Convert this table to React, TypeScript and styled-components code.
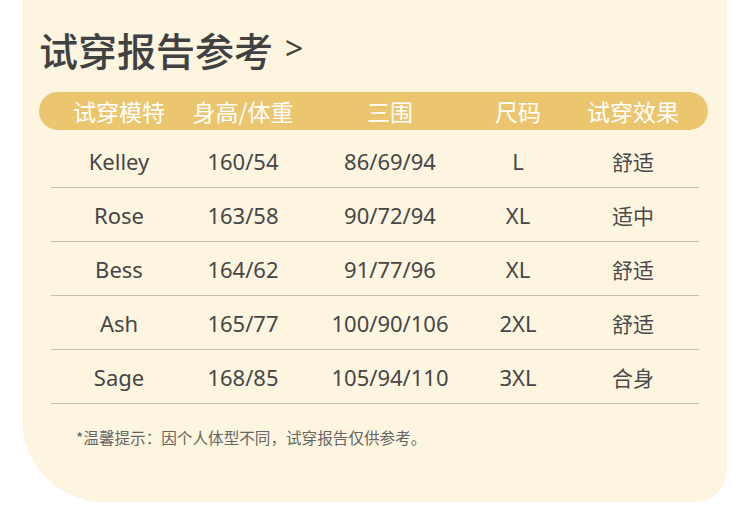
import React from "react";
import styled, { createGlobalStyle } from "styled-components";

const Global = createGlobalStyle`
  html, body { margin: 0; padding: 0; background: #ffffff; }
  body { font-family: "Noto Sans", "Noto Sans CJK SC", sans-serif; }
`;

const Card = styled.div`
  margin-left: 22px;
  width: 705px;
  height: 502px;
  box-sizing: border-box;
  background: #fef5e0;
  border-radius: 0 0 32px 82px;
  padding: 21px 0 0 17px;
  display: flex;
  flex-direction: column;
`;

const Title = styled.h1`
  margin: 0;
  font-family: "Noto Sans CJK SC", sans-serif;
  font-weight: 500;
  font-size: 39px;
  line-height: 56px;
  color: #414141;
  display: flex;
  align-items: center;
`;

const Arrow = styled.span`
  margin-left: 12px;
  font-family: "Noto Sans", sans-serif;
  font-weight: 400;
  font-size: 32px;
  line-height: 56px;
  transform: translateY(-1px);
`;

const HeaderBar = styled.div`
  margin-top: 15px;
  width: 669px;
  height: 38px;
  border-radius: 19px;
  background: #ecc66f;
  padding-left: 12px;
  box-sizing: border-box;
  display: flex;
  align-items: center;
`;

const Cols = "136px 112px 182px 74px 156px";

const HeaderGrid = styled.div`
  display: grid;
  grid-template-columns: ${Cols};
  width: 648px;
  color: #ffffff;
  font-family: "Noto Sans CJK SC", sans-serif;
  font-size: 23px;
  font-weight: 400;
  justify-items: center;
  line-height: 38px;
`;

const Table = styled.div`
  margin-top: 4px;
  margin-left: 12px;
  width: 648px;
  display: flex;
  flex-direction: column;
`;

const Row = styled.div`
  display: grid;
  grid-template-columns: ${Cols};
  height: 54px;
  border-bottom: 1px solid #c8c0b2;
  align-items: center;
  justify-items: center;
  box-sizing: border-box;
  padding-bottom: 0;
`;

const Cell = styled.span<{ $cjk?: boolean }>`
  font-family: ${(p) => (p.$cjk ? `"Noto Sans CJK SC", sans-serif` : `"Noto Sans", "Noto Sans CJK SC", sans-serif`)};
  font-weight: 400;
  font-size: ${(p) => (p.$cjk ? "21px" : "22px")};
  color: ${(p) => (p.$cjk ? "#4a4a4a" : "#464646")};
`;

const Note = styled.p`
  margin: 22px 0 0 37px;
  font-family: "Noto Sans CJK SC", sans-serif;
  font-size: 15.6px;
  color: #666666;
`;

const rows = [
  ["Kelley", "160/54", "86/69/94", "L", "舒适"],
  ["Rose", "163/58", "90/72/94", "XL", "适中"],
  ["Bess", "164/62", "91/77/96", "XL", "舒适"],
  ["Ash", "165/77", "100/90/106", "2XL", "舒适"],
  ["Sage", "168/85", "105/94/110", "3XL", "合身"],
];

export default function App() {
  return (
    <>
      <Global />
      <Card>
        <Title>
          试穿报告参考<Arrow>&gt;</Arrow>
        </Title>
        <HeaderBar>
          <HeaderGrid>
            <span>试穿模特</span>
            <span>身高/体重</span>
            <span>三围</span>
            <span>尺码</span>
            <span>试穿效果</span>
          </HeaderGrid>
        </HeaderBar>
        <Table>
          {rows.map((r) => (
            <Row key={r[0]}>
              {r.map((c, i) => (
                <Cell key={i} $cjk={i === 4}>
                  {c}
                </Cell>
              ))}
            </Row>
          ))}
        </Table>
        <Note>*温馨提示：因个人体型不同，试穿报告仅供参考。</Note>
      </Card>
    </>
  );
}
